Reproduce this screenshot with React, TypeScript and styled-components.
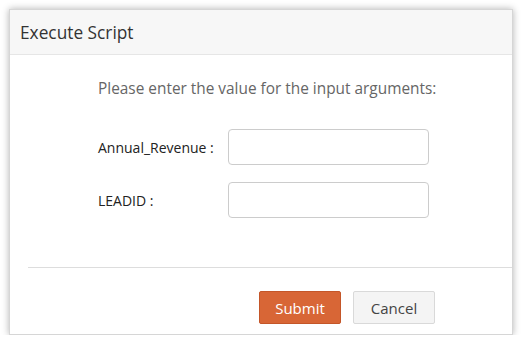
import styled, { createGlobalStyle } from "styled-components";

const GlobalStyle = createGlobalStyle`
  body {
    margin: 0;
    background: #ffffff;
    font-family: "Open Sans", "Liberation Sans", sans-serif;
  }
`;

const fields = ["Annual_Revenue :", "LEADID :"];

export default function App() {
  return (
    <>
      <GlobalStyle />
      <Page>
        <Dialog>
          <Header>
            <Title>Execute Script</Title>
          </Header>

          <Body>
            <Prompt>Please enter the value for the input arguments:</Prompt>
            <Fields>
              {fields.map((label) => (
                <FieldRow key={label}>
                  <Label>{label}</Label>
                  <Input type="text" />
                </FieldRow>
              ))}
            </Fields>
          </Body>

          <Divider />

          <Footer>
            <Button $primary>Submit</Button>
            <Button>Cancel</Button>
          </Footer>
        </Dialog>
      </Page>
    </>
  );
}

const Page = styled.div`
  padding: 9px 0 0 9px;
`;

const Dialog = styled.div`
  display: flex;
  flex-direction: column;

  width: 504px;
  height: 326px;
  box-sizing: border-box;

  background: #ffffff;
  border: 1px solid #d6d6d6;
  box-shadow: 0 0 7px rgba(0, 0, 0, 0.3);
`;

const Header = styled.div`
  display: flex;
  align-items: center;

  height: 44px;
  padding-left: 10px;

  background: #f7f7f7;
  border-bottom: 1px solid #e6e6e6;
`;

const Title = styled.span`
  font-size: 17.3px;
  color: #333333;
`;

const Body = styled.div`
  padding: 24px 0 0 88px;
`;

const Prompt = styled.div`
  font-size: 15.4px;
  line-height: 20px;
  color: #666666;
`;

const Fields = styled.div`
  display: flex;
  flex-direction: column;
  gap: 17px;

  margin-top: 30px;
`;

const FieldRow = styled.div`
  display: flex;
  align-items: center;
`;

const Label = styled.span`
  width: 130px;

  font-size: 14px;
  color: #222222;
`;

const Input = styled.input`
  width: 201px;
  height: 36px;
  box-sizing: border-box;

  border: 1px solid #cccccc;
  border-radius: 4px;
  outline: none;
`;

const Divider = styled.div`
  height: 1px;
  margin: 49px 0 0 18px;

  background: #dddddd;
`;

const Footer = styled.div`
  display: flex;
  gap: 12px;

  padding: 23px 0 0 249px;
`;

const Button = styled.button<{ $primary?: boolean }>`
  width: 82px;
  height: 33px;
  box-sizing: border-box;

  font-family: "Open Sans", "Liberation Sans", sans-serif;
  font-size: 15px;

  border-radius: 2px;
  border: 1px solid ${(p) => (p.$primary ? "#c45629" : "#d9d9d9")};
  background: ${(p) => (p.$primary ? "#d86636" : "#f4f4f4")};
  color: ${(p) => (p.$primary ? "#ffffff" : "#444444")};
`;
